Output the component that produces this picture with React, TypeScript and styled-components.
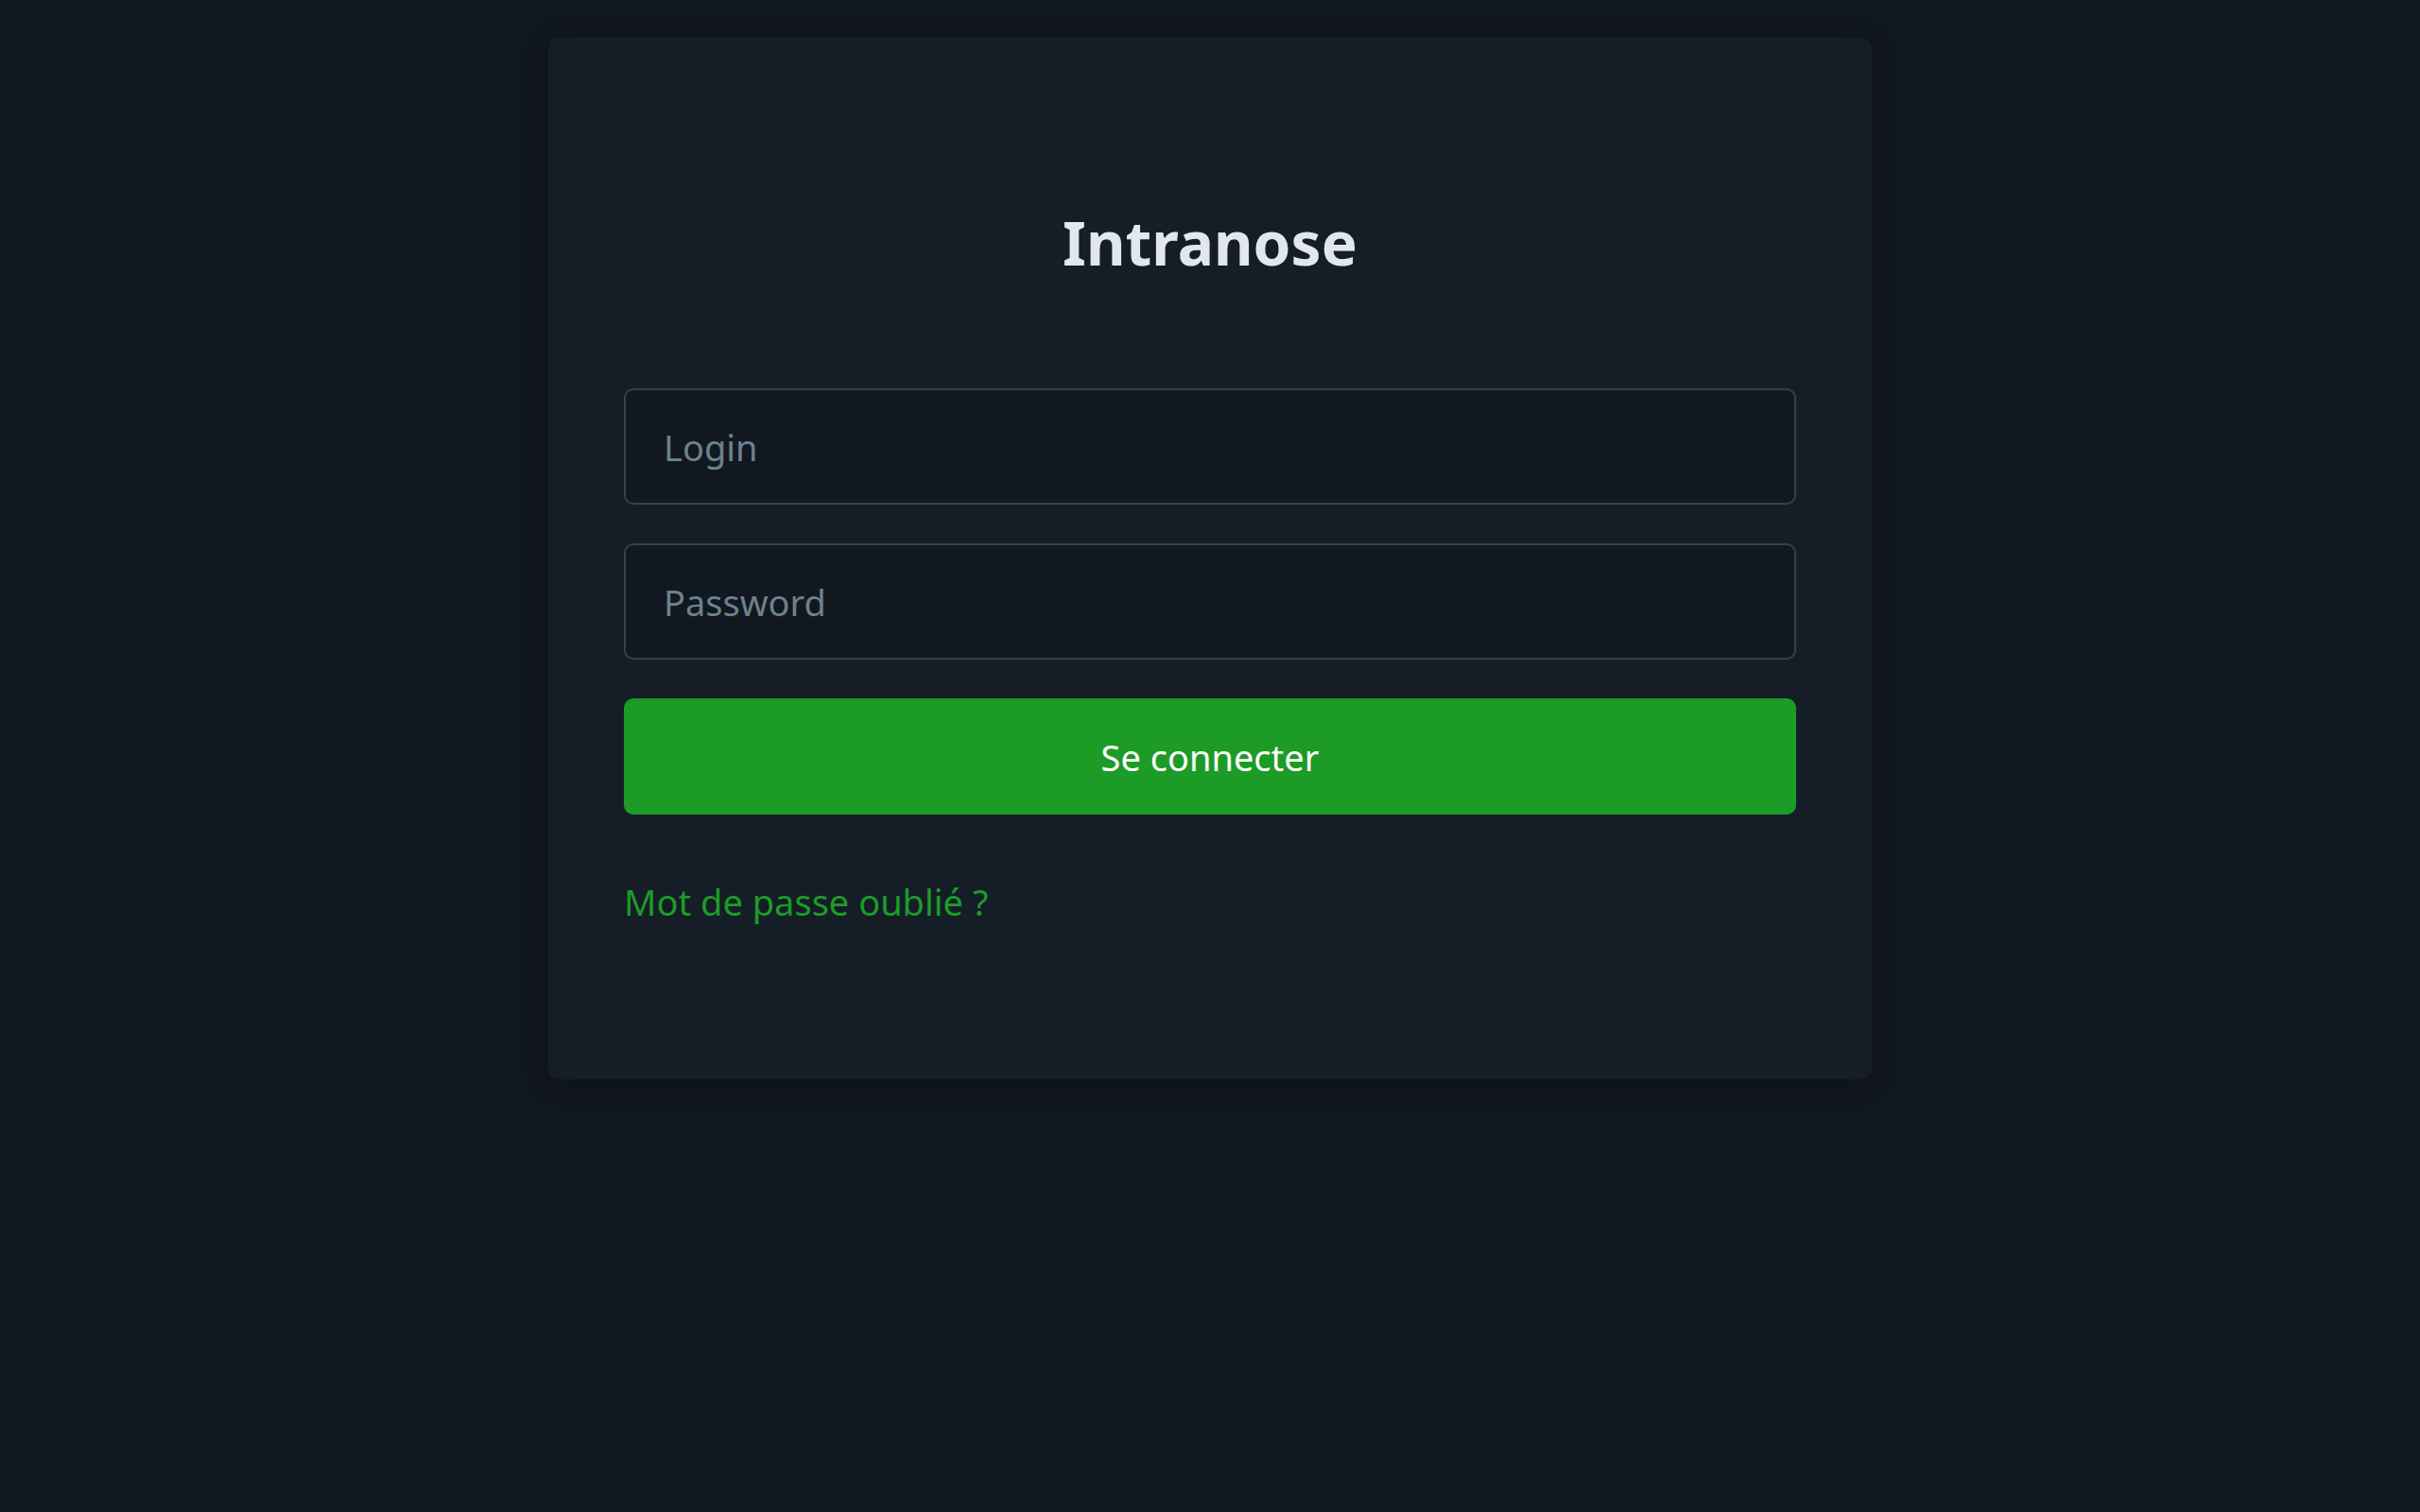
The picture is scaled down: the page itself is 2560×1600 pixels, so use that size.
import React from "react";
import styled, { createGlobalStyle } from "styled-components";

const Global = createGlobalStyle`
  html, body { margin: 0; padding: 0; background: #11171e; }
  body { font-family: "Noto Sans", "Open Sans", sans-serif; min-height: 1600px; }
  * { box-sizing: border-box; }
`;

const Page = styled.main`
  min-height: 1600px;
  padding-top: 40px;
  display: flex;
  justify-content: center;
  align-items: flex-start;
`;

const Card = styled.section`
  width: 1400px;
  background: #151e27;
  border-radius: 10px;
  box-shadow: 0 4px 24px rgba(0, 0, 0, 0.22);
  padding: 185px 80px 164px;
  display: flex;
  flex-direction: column;
`;

const Title = styled.h1`
  margin: 0 0 122px;
  text-align: center;
  font-size: 64px;
  line-height: 1;
  font-weight: 700;
  color: #e2e7ec;
`;

const Form = styled.form`
  display: flex;
  flex-direction: column;
  gap: 41px;
`;

const Input = styled.input`
  height: 123px;
  width: 100%;
  background: #12181f;
  border: 2px solid #33414d;
  border-radius: 10px;
  padding: 0 40px;
  font-family: inherit;
  font-size: 38px;
  color: #e2e7ec;
  outline: none;
  &::placeholder { color: #6b8290; }
`;

const Button = styled.button`
  height: 123px;
  width: 100%;
  background: #1c9c26;
  border: none;
  border-radius: 10px;
  color: #ffffff;
  font-family: inherit;
  font-size: 38px;
  cursor: pointer;
`;

const Link = styled.a`
  margin-top: 70px;
  align-self: flex-start;
  color: #1c9c26;
  font-size: 38px;
  line-height: 1.2;
  text-decoration: none;
`;

export default function App() {
  return (
    <>
      <Global />
      <Page>
        <Card>
          <Title>Intranose</Title>
          <Form onSubmit={(e) => e.preventDefault()}>
            <Input type="text" placeholder="Login" />
            <Input type="password" placeholder="Password" />
            <Button type="submit">Se connecter</Button>
          </Form>
          <Link href="#">Mot de passe oublié ?</Link>
        </Card>
      </Page>
    </>
  );
}
